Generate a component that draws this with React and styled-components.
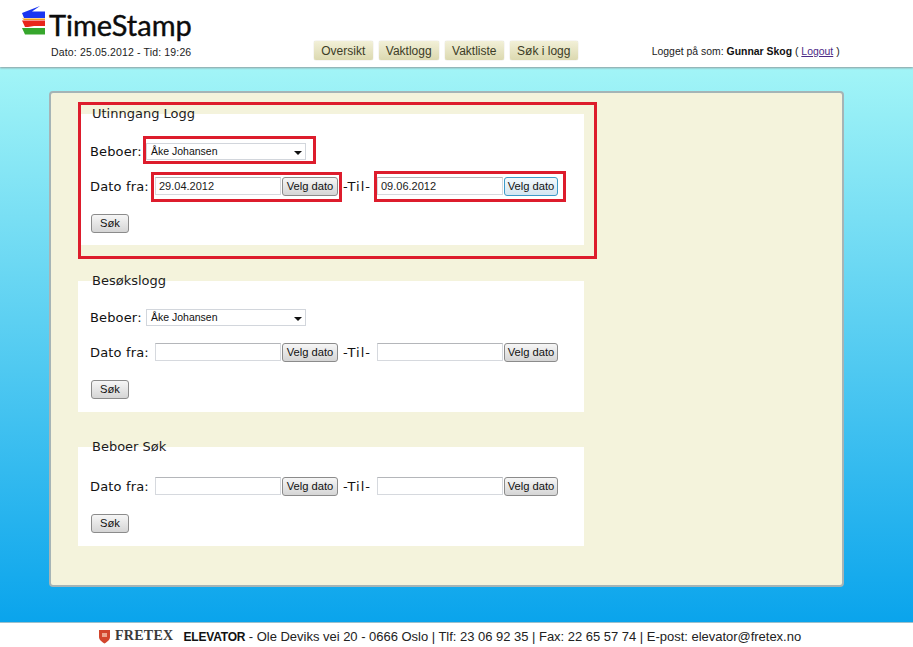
// App.jsx
import React from "react";
import styled, { createGlobalStyle } from "styled-components";

const GlobalStyle = createGlobalStyle`
  html, body {
    margin: 0;
    padding: 0;
    background: #fff;
  }

  body {
    font-family: "Liberation Sans", Arial, sans-serif;
    color: #111;
  }
`;

const Page = styled.div`
  width: 913px;
  height: 647px;
  display: flex;
  flex-direction: column;
  overflow: hidden;
`;

const Header = styled.header`
  height: 67px;
  flex: none;
  display: flex;
  position: relative;
  z-index: 1;
  box-shadow: 0 1px 2px #8e9a9c;
  background: #fff;
`;

const Brand = styled.div`
  width: 300px;
  padding: 5px 0 0 21px;
  box-sizing: border-box;
`;

const LogoRow = styled.div`
  display: flex;
  align-items: flex-start;
  gap: 3px;
  height: 40px;
`;

const LogoText = styled.span`
  font-family: Lato, "Liberation Sans", sans-serif;
  font-size: 29px;
  line-height: 40px;
  color: #0c0c0c;
  -webkit-text-stroke: 0.4px #0c0c0c;
`;

const DateLine = styled.div`
  margin: 1px 0 0 30px;
  font-size: 10.5px;
  line-height: 13px;
  letter-spacing: 0.15px;
  color: #222;
`;

const Nav = styled.nav`
  display: flex;
  gap: 6px;
  margin: 41px 0 0 14px;
  align-self: flex-start;
`;

const NavItem = styled.a`
  height: 19px;
  padding: 0 7.25px;
  display: flex;
  align-items: center;
  font-size: 12px;
  color: #3c3c26;
  background: linear-gradient(#f2f0d8, #dcd9b0);
  border-radius: 2px;
  box-shadow: 0 0 1px #a9a78c;
`;

const User = styled.div`
  margin: 45px 0 0 74px;
  line-height: 13px;
  font-size: 10.45px;
  white-space: nowrap;
  color: #222;

  b {
    color: #111;
  }

  a {
    color: #4b2a86;
    text-decoration: underline;
  }
`;

const Main = styled.main`
  flex: 1;
  min-height: 0;
  padding: 24px 69px 0 49px;
  background: linear-gradient(#a2f5f7, #0aa4ec);
`;

const Panel = styled.div`
  height: 480px;
  padding: 12px 0 0 27px;
  display: flex;
  flex-direction: column;
  align-items: flex-start;
  background: #f4f3dc;
  border: 2px solid #a5b4b6;
  border-radius: 4px;
`;

const Section = styled.fieldset`
  position: relative;
  width: 506px;
  box-sizing: border-box;
  margin: ${(p) => p.$gap}px 0 0;
  padding: ${(p) => p.$top}px 0 ${(p) => p.$bottom}px 12px;
  border: none;
  background: #fff;
`;

const Legend = styled.legend`
  margin-left: 2px;
  padding: 0;
  font-family: "DejaVu Sans", Verdana, sans-serif;
  font-size: 13px;
  line-height: 18px;
  color: #1c1c1c;
`;

const Row = styled.div`
  display: flex;
  align-items: center;
  height: 20px;
  margin-bottom: ${(p) => p.$after || 0}px;
`;

const Label = styled.label`
  flex: none;
  width: ${(p) => p.$width}px;
  font-family: "DejaVu Sans", Verdana, sans-serif;
  font-size: 13px;
  letter-spacing: 0.15px;
  color: #111;
  white-space: nowrap;
`;

const Group = styled.span`
  position: relative;
  display: flex;
  align-items: center;
`;

const Mark = styled.span`
  position: absolute;
  inset: ${(p) => p.$inset};
  border: 3px solid #dd1c2c;
  pointer-events: none;
`;

const Outline = styled.div`
  position: absolute;
  left: 0;
  top: -21px;
  width: 519px;
  height: 157px;
  box-sizing: border-box;
  border: 3px solid #dd1c2c;
  pointer-events: none;
`;

const Select = styled.div`
  width: 160px;
  height: 17px;
  box-sizing: border-box;
  padding-left: 4px;
  display: flex;
  align-items: center;
  justify-content: space-between;
  font-size: 10.5px;
  color: #111;
  background: #fff;
  border: 1px solid #d2d6dc;
`;

const Caret = styled.span`
  width: 0;
  height: 0;
  margin: 3px 3px 0 0;
  border-left: 4px solid transparent;
  border-right: 4px solid transparent;
  border-top: 4px solid #111;
`;

const DateInput = styled.div`
  width: 126px;
  height: 18px;
  box-sizing: border-box;
  padding-left: 3px;
  display: flex;
  align-items: center;
  font-size: 11px;
  color: #1a1a1a;
  background: #fff;
  border: 1px solid #d6d9de;
  border-top-color: #b4b6ba;
`;

const Button = styled.button`
  height: 19px;
  padding: 0;
  width: ${(p) => p.$width}px;
  margin-left: ${(p) => p.$left || 0}px;
  font-family: "Liberation Sans", Arial, sans-serif;
  font-size: 11.2px;
  color: #111;
  background: ${(p) => (p.$focused ? "linear-gradient(#f4f9fc, #d3e6f2)" : "linear-gradient(#f6f6f6, #d5d5d5)")};
  border: 1px solid ${(p) => (p.$focused ? "#3e9bc9" : "#8b8b8b")};
  border-radius: 3px;
`;

const Til = styled.span`
  width: 39px;
  padding-left: 5px;
  box-sizing: border-box;
  font-family: "DejaVu Sans", Verdana, sans-serif;
  font-size: 13px;
  letter-spacing: 1px;
  white-space: nowrap;
  color: #111;
`;

const Footer = styled.footer`
  height: 25px;
  flex: none;
  display: flex;
  align-items: center;
  justify-content: center;
  gap: 3px;
  padding: 2px 14px 0 0;
  background: #fff;
  border-top: 1px solid #9cc0cc;
  box-sizing: border-box;
  font-size: 13px;
  letter-spacing: -0.02px;
  white-space: nowrap;
  color: #222;

  b {
    font-size: 12px;
    letter-spacing: -0.2px;
    color: #111;
  }
`;

const Fretex = styled.span`
  margin: 0 7px 0 1px;
  font-family: "Liberation Serif", serif;
  font-size: 14px;
  font-weight: bold;
  letter-spacing: 0.3px;
  color: #3a3a3a;
`;

const LogoIcon = () => (
  <svg width="25" height="30" viewBox="0 0 25 30">
    <path d="M1 8 L19 1 L11 6.5 L24 6.5 L24 13 L3 13 Z" fill="#1a35f0" />
    <path d="M1 13.5 L24 13.5 L24 15 L3 15 Z" fill="#f0a01c" />
    <path d="M1 15.5 L24 15.5 L24 21 L7 21 L13 22 L4 22 Z" fill="#e8261c" />
    <path d="M1 23 L24 23 L24 29.5 L4 29.5 Z" fill="#36a62c" />
  </svg>
);

const Shield = () => (
  <svg width="13" height="15" viewBox="0 0 13 15">
    <path d="M1 1 L12 1 L12 8 C12 11 9 13 6.5 14.5 C4 13 1 11 1 8 Z" fill="#d2452c" />
    <path d="M4 4 L9 4 L9 8 L4 8 Z" fill="#eda58e" />
  </svg>
);

const DateRange = ({ from, to, marked }) => (
  <Row $after={17}>
    <Label $width={65}>Dato fra:</Label>
    <Group>
      <DateInput>{from}</DateInput>
      <Button $width={56} $left={1}>Velg dato</Button>
      {marked && <Mark $inset="-5px -4px -6px -4px" />}
    </Group>
    <Til>-Til-</Til>
    <Group>
      <DateInput>{to}</DateInput>
      <Button $width={54} $left={1} $focused={marked}>Velg dato</Button>
      {marked && <Mark $inset="-6px -8px -6px -3px" />}
    </Group>
  </Row>
);

const Resident = ({ marked }) => (
  <Row $after={15}>
    <Label $width={56}>Beboer:</Label>
    <Group>
      <Select>
        Åke Johansen
        <Caret />
      </Select>
      {marked && <Mark $inset="-7px -10px -4px -3px" />}
    </Group>
  </Row>
);

const SearchRow = () => (
  <Row>
    <Button $width={38} $left={1}>Søk</Button>
  </Row>
);

export default function App() {
  return (
    <Page>
      <GlobalStyle />
      <Header>
        <Brand>
          <LogoRow>
            <LogoIcon />
            <LogoText>TimeStamp</LogoText>
          </LogoRow>
          <DateLine>Dato: 25.05.2012 - Tid: 19:26</DateLine>
        </Brand>
        <Nav>
          <NavItem>Oversikt</NavItem>
          <NavItem>Vaktlogg</NavItem>
          <NavItem>Vaktliste</NavItem>
          <NavItem>Søk i logg</NavItem>
        </Nav>
        <User>
          Logget på som: <b>Gunnar Skog</b> ( <a href="#logout">Logout</a> )
        </User>
      </Header>
      <Main>
        <Panel>
          <Section $gap={0} $top={18} $bottom={12}>
            <Legend>Utinngang Logg</Legend>
            <Outline />
            <Resident marked />
            <DateRange from="29.04.2012" to="09.06.2012" marked />
            <SearchRow />
          </Section>
          <Section $gap={27} $top={17} $bottom={13}>
            <Legend>Besøkslogg</Legend>
            <Resident />
            <DateRange />
            <SearchRow />
          </Section>
          <Section $gap={26} $top={20} $bottom={13}>
            <Legend>Beboer Søk</Legend>
            <DateRange />
            <SearchRow />
          </Section>
        </Panel>
      </Main>
      <Footer>
        <Shield />
        <Fretex>FRETEX</Fretex>
        <span>
          <b>ELEVATOR</b> - Ole Deviks vei 20 - 0666 Oslo | Tlf: 23 06 92 35 | Fax: 22 65 57 74 | E-post: elevator@fretex.no
        </span>
      </Footer>
    </Page>
  );
}
